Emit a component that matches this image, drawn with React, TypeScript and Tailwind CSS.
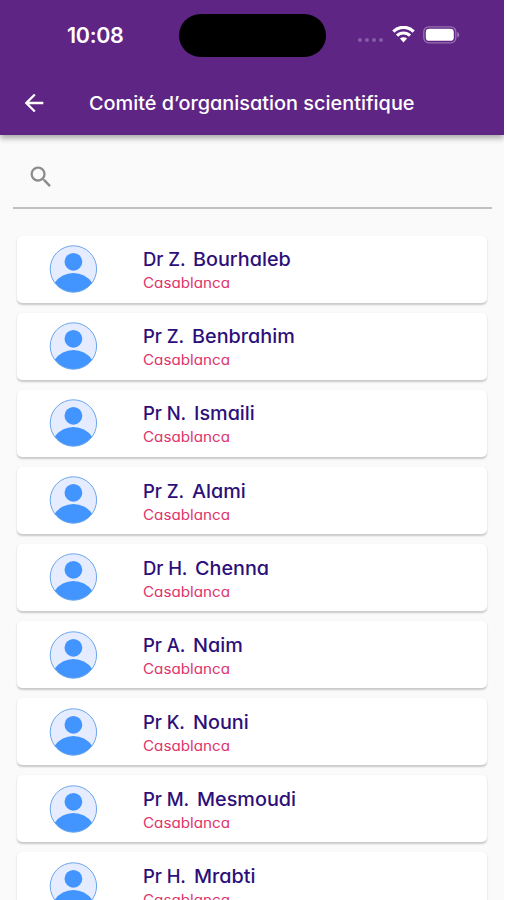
import { useState } from "react";

// Committee members, in display order
const membersData = [
  { title: "Dr Z.", name: "Bourhaleb", city: "Casablanca" },
  { title: "Pr Z.", name: "Benbrahim", city: "Casablanca" },
  { title: "Pr N.", name: "Ismaili", city: "Casablanca" },
  { title: "Pr Z.", name: "Alami", city: "Casablanca" },
  { title: "Dr H.", name: "Chenna", city: "Casablanca" },
  { title: "Pr A.", name: "Naim", city: "Casablanca" },
  { title: "Pr K.", name: "Nouni", city: "Casablanca" },
  { title: "Pr M.", name: "Mesmoudi", city: "Casablanca" },
  { title: "Pr H.", name: "Mrabti", city: "Casablanca" },
];

function StatusBar() {
  return (
    <div className="flex h-[71px] items-start">
      <span className="ml-[67px] mt-[21px] w-[112px] text-[21.5px] leading-[28px] font-semibold tracking-[-0.3px]">
        10:08
      </span>
      <div className="mt-[14px] h-[43px] w-[147px] rounded-full bg-black" />
      <div className="ml-8 mt-[38px] flex gap-[3px]">
        {[0, 1, 2, 3].map((dot) => (
          <span key={dot} className="size-1 rounded-full bg-white/25" />
        ))}
      </div>
      <svg className="ml-[8.5px] mt-[26px] h-[17px] w-[23px]" viewBox="0 0 23 17" fill="none">
        <path d="M1.4 5.6a14.3 14.3 0 0 1 20.2 0" stroke="white" strokeWidth="3.4" />
        <path d="M5 9.6a9.2 9.2 0 0 1 13 0" stroke="white" strokeWidth="3" />
        <path d="M7.9 12.6a5.2 5.2 0 0 1 7.2 0L11.5 16.4z" fill="white" />
      </svg>
      <svg className="ml-2 mt-[26px] h-[18px] w-[38px]" viewBox="0 0 38 18" fill="none">
        <rect x="0.8" y="0.8" width="32" height="16" rx="5" stroke="white" strokeOpacity="0.35" strokeWidth="1.3" />
        <rect x="2.8" y="2.8" width="28" height="12" rx="3.4" fill="white" />
        <path d="M34.3 6v5.6c2.6-1 2.6-4.6 0-5.6z" fill="white" fillOpacity="0.4" />
      </svg>
    </div>
  );
}

function Avatar() {
  return (
    <svg className="size-12 shrink-0" viewBox="0 0 48 48">
      <circle cx="24.4" cy="24" r="23.2" fill="#e6ecff" />
      <path d="M5.7 37.7a22.8 22.8 0 0 1 37.4 0A23.2 23.2 0 0 1 5.7 37.7z" fill="#4294ff" />
      <circle cx="24.4" cy="16.8" r="8.9" fill="#4294ff" />
      <circle cx="24.4" cy="24" r="23.2" fill="none" stroke="#6ba6ea" strokeWidth="1" />
    </svg>
  );
}

export default function App() {
  const [query, setQuery] = useState("");

  const members = membersData.filter((member) =>
    member.name.toLowerCase().includes(query.toLowerCase())
  );

  return (
    <div className="h-screen overflow-hidden bg-white font-[Inter,sans-serif] [font-feature-settings:'cv11']">
      <div className="h-full w-[503.5px] overflow-hidden bg-[#fafafa]">
        <header className="relative h-[135px] bg-[#5f2585] text-white shadow-[0_3px_6px_rgba(0,0,0,0.35)]">
          <StatusBar />
          <div className="flex h-16 items-center">
            <button aria-label="Retour" className="ml-[19.5px]">
              <svg className="size-[28px]" viewBox="0 0 24 24" fill="white">
                <path d="M20 11H7.83l5.59-5.59L12 4l-8 8 8 8 1.41-1.41L7.83 13H20v-2z" />
              </svg>
            </button>
            <h1 className="ml-[41.5px] origin-left scale-x-[1.075] pt-[2px] text-[18.5px] font-medium whitespace-nowrap">
              Comité d’organisation scientifique
            </h1>
          </div>
        </header>

        <div className="mr-3 ml-[13px] flex h-[74px] items-center border-b-2 border-[#c0c0c0] pb-[6px] pt-[18px]">
          <svg className="ml-[13.5px] size-[28px] shrink-0" viewBox="0 0 24 24" fill="#8b8b8b">
            <path d="M15.5 14h-.79l-.28-.27A6.471 6.471 0 0 0 16 9.5 6.5 6.5 0 1 0 9.5 16c1.61 0 3.09-.59 4.23-1.57l.27.28v.79l5 4.99L20.49 19l-4.99-5zm-6 0C7.01 14 5 11.99 5 9.5S7.01 5 9.5 5 14 7.01 14 9.5 11.99 14 9.5 14z" />
          </svg>
          <input
            aria-label="Rechercher"
            value={query}
            onChange={(e) => setQuery(e.target.value)}
            className="ml-3 w-full bg-transparent text-lg outline-none"
          />
        </div>

        <ul className="mt-[26.5px] mr-[16.5px] ml-[17px] flex flex-col gap-[10px]">
          {members.map((member) => (
            <li
              key={member.title + member.name}
              className="flex h-[67.1px] shrink-0 items-center rounded-[5px] bg-white pl-8 shadow-[0_1.5px_2px_rgba(0,0,0,0.2)]"
            >
              <Avatar />
              <div className="ml-[46px] pt-[1.5px]">
                <p className="flex gap-2 text-[18.5px] leading-[27px] font-medium text-[#2d0f7a]">
                  <span className="tracking-[-0.1px]">{member.title}</span>
                  <span className="origin-left scale-x-[1.07]">{member.name}</span>
                </p>
                <p className="origin-left scale-x-[1.085] text-[14px] leading-[20px] text-[#e0336b]">
                  {member.city}
                </p>
              </div>
            </li>
          ))}
        </ul>
      </div>
    </div>
  );
}
